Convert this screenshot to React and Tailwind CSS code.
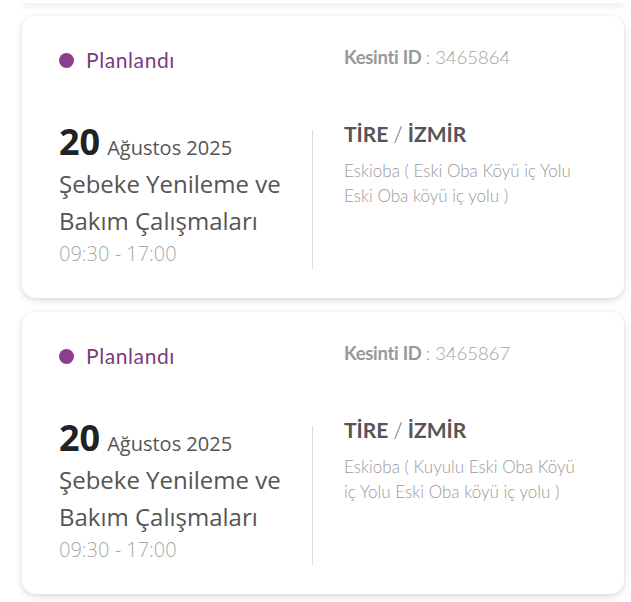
import React from "react";

const outages = [
  {
    id: "3465864",
    day: "20",
    month: "Ağustos 2025",
    title: "Şebeke Yenileme ve Bakım Çalışmaları",
    time: "09:30 - 17:00",
    city: "TİRE",
    region: "İZMİR",
    address: "Eskioba ( Eski Oba Köyü iç Yolu Eski Oba köyü iç yolu )",
  },
  {
    id: "3465867",
    day: "20",
    month: "Ağustos 2025",
    title: "Şebeke Yenileme ve Bakım Çalışmaları",
    time: "09:30 - 17:00",
    city: "TİRE",
    region: "İZMİR",
    address: "Eskioba ( Kuyulu Eski Oba Köyü iç Yolu Eski Oba köyü iç yolu )",
  },
];

function OutageCard({ item }) {
  return (
    <div className="ml-[22px] w-[602px] rounded-[14px] bg-white pb-[29px] pl-[37px] pt-[30px] shadow-[0_2px_7px_rgba(0,0,0,0.16)]">
      <div className="grid grid-cols-[254px_1fr]">
        <div className="flex h-[28px] items-center gap-[12px]">
          <span className="h-[15px] w-[15px] rounded-full bg-[#8a3e8c]" />
          <span className="font-['Lato',sans-serif] text-[21px] tracking-[0.6px] text-[#7a3b7c]">Planlandı</span>
        </div>
        <div className="flex h-[24px] items-center pl-[31px] font-['Lato',sans-serif] text-[18.5px] text-[#a3a3a3]">
          <span className="font-bold tracking-[-0.3px] text-[#999]">Kesinti ID</span>
          <span className="ml-[4px] font-light">: {item.id}</span>
        </div>
      </div>

      <div className="mt-[45px] grid grid-cols-[254px_1fr] items-start">
        <div className="mt-[11px] border-r border-[#dcdcdc] pr-[24px] font-['Open_Sans',sans-serif]">
          <div className="flex items-baseline gap-[7px] leading-[24px]">
            <span className="text-[36px] font-bold text-[#222]">{item.day}</span>
            <span className="text-[20px] text-[#555]">{item.month}</span>
          </div>
          <p className="mt-[5px] text-[24px] leading-[37px] text-[#555]">{item.title}</p>
          <p className="text-[20px] font-light leading-[30px] text-[#a8a8a8]">{item.time}</p>
        </div>
        <div className="pl-[31px] pr-[40px] pt-[1px] font-['Lato',sans-serif]">
          <p className="text-[21px] font-bold leading-[28px] text-[#555]">
            {item.city} <span className="font-light">/</span> {item.region}
          </p>
          <p className="mt-[10px] text-[17px] font-light leading-[25px] text-[#999]">{item.address}</p>
        </div>
      </div>
    </div>
  );
}

export default function App() {
  return (
    <div className="min-h-[602px] bg-white">
      <div className="ml-[22px] h-[3px] w-[602px] rounded-b-[14px] bg-white shadow-[0_2px_7px_rgba(0,0,0,0.16)]" />
      <div className="mt-[13px] flex flex-col gap-[14px]">
        {outages.map((o) => (
          <OutageCard key={o.id} item={o} />
        ))}
      </div>
    </div>
  );
}
